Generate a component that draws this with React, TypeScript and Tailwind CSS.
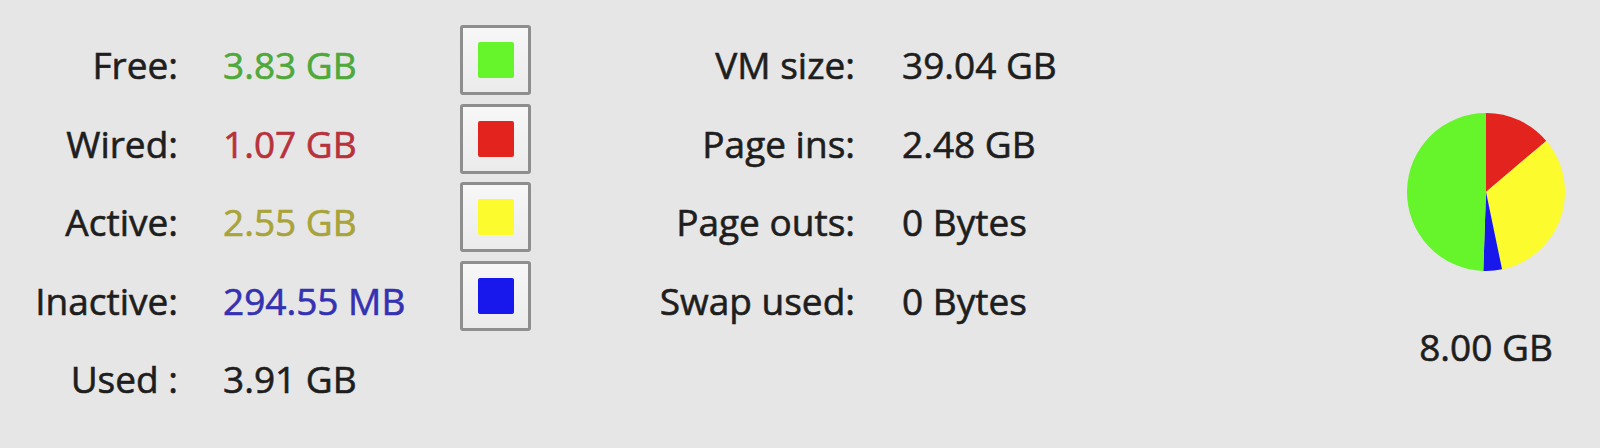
import React from "react";

const slices = [
  { v: 1.07, c: "#e2231e" },
  { v: 2.55, c: "#fbfb2e" },
  { v: 0.29455, c: "#1818ec" },
  { v: 3.83, c: "#66f42a" },
];

function Pie() {
  const total = slices.reduce((a, s) => a + s.v, 0);
  const r = 79;
  const cx = 79;
  const cy = 79;
  let acc = 0;
  const paths = slices.map((s, i) => {
    const a0 = (acc / total) * Math.PI * 2;
    acc += s.v;
    const a1 = (acc / total) * Math.PI * 2;
    const x0 = cx + r * Math.sin(a0);
    const y0 = cy - r * Math.cos(a0);
    const x1 = cx + r * Math.sin(a1);
    const y1 = cy - r * Math.cos(a1);
    const large = a1 - a0 > Math.PI ? 1 : 0;
    const d = `M${cx},${cy} L${x0},${y0} A${r},${r} 0 ${large} 1 ${x1},${y1} Z`;
    return <path key={i} d={d} fill={s.c} />;
  });
  return (
    <svg width="158" height="158" viewBox="0 0 158 158">
      {paths}
    </svg>
  );
}

function Swatch({ color }: { color: string }) {
  return (
    <div className="w-[71px] h-[70px] rounded-[3px] border-[3px] border-[#8e8e8e] bg-gradient-to-b from-[#f7f7f7] to-[#ebebeb] flex items-center justify-center">
      <div className={`w-[36px] h-[36px] rounded-[2px] ${color}`} />
    </div>
  );
}

const left = [
  { l: "Free:", v: "3.83 GB", c: "text-[#4fa83a]" },
  { l: "Wired:", v: "1.07 GB", c: "text-[#b8323c]" },
  { l: "Active:", v: "2.55 GB", c: "text-[#a9a33a]" },
  { l: "Inactive:", v: "294.55 MB", c: "text-[#3431b2]" },
  { l: "Used :", v: "3.91 GB", c: "text-[#1e1e1e]" },
];

const mid = [
  { l: "VM size:", v: "39.04 GB" },
  { l: "Page ins:", v: "2.48 GB" },
  { l: "Page outs:", v: "0 Bytes" },
  { l: "Swap used:", v: "0 Bytes" },
];

export default function App() {
  return (
    <div
      className="w-[1600px] h-[448px] bg-[#e6e6e6] flex items-start text-[37px] [-webkit-text-stroke:0.6px] text-[#1e1e1e] overflow-hidden"
      style={{ fontFamily: '"Open Sans", "Liberation Sans", sans-serif' }}
    >
      <div className="grid grid-cols-[178px_237px] gap-x-[45px] pt-[26px] leading-[78.5px]">
        {left.map((r) => (
          <React.Fragment key={r.l}>
            <div className="text-right whitespace-nowrap">{r.l}</div>
            <div className={`whitespace-nowrap ${r.c}`}>{r.v}</div>
          </React.Fragment>
        ))}
      </div>
      <div className="flex flex-col gap-[8.5px] pt-[25px]">
        <Swatch color="bg-[#66f42a]" />
        <Swatch color="bg-[#e2231e]" />
        <Swatch color="bg-[#fbfb2e]" />
        <Swatch color="bg-[#1818ec]" />
      </div>
      <div className="ml-[69px] grid grid-cols-[255px_400px] gap-x-[47px] pt-[26px] leading-[78.5px]">
        {mid.map((r) => (
          <React.Fragment key={r.l}>
            <div className="text-right whitespace-nowrap">{r.l}</div>
            <div className="whitespace-nowrap">{r.v}</div>
          </React.Fragment>
        ))}
      </div>
      <div className="ml-[105px] w-[158px] flex flex-col items-center pt-[113px]">
        <Pie />
        <div className="mt-[51px] leading-[50px] whitespace-nowrap">8.00 GB</div>
      </div>
    </div>
  );
}
